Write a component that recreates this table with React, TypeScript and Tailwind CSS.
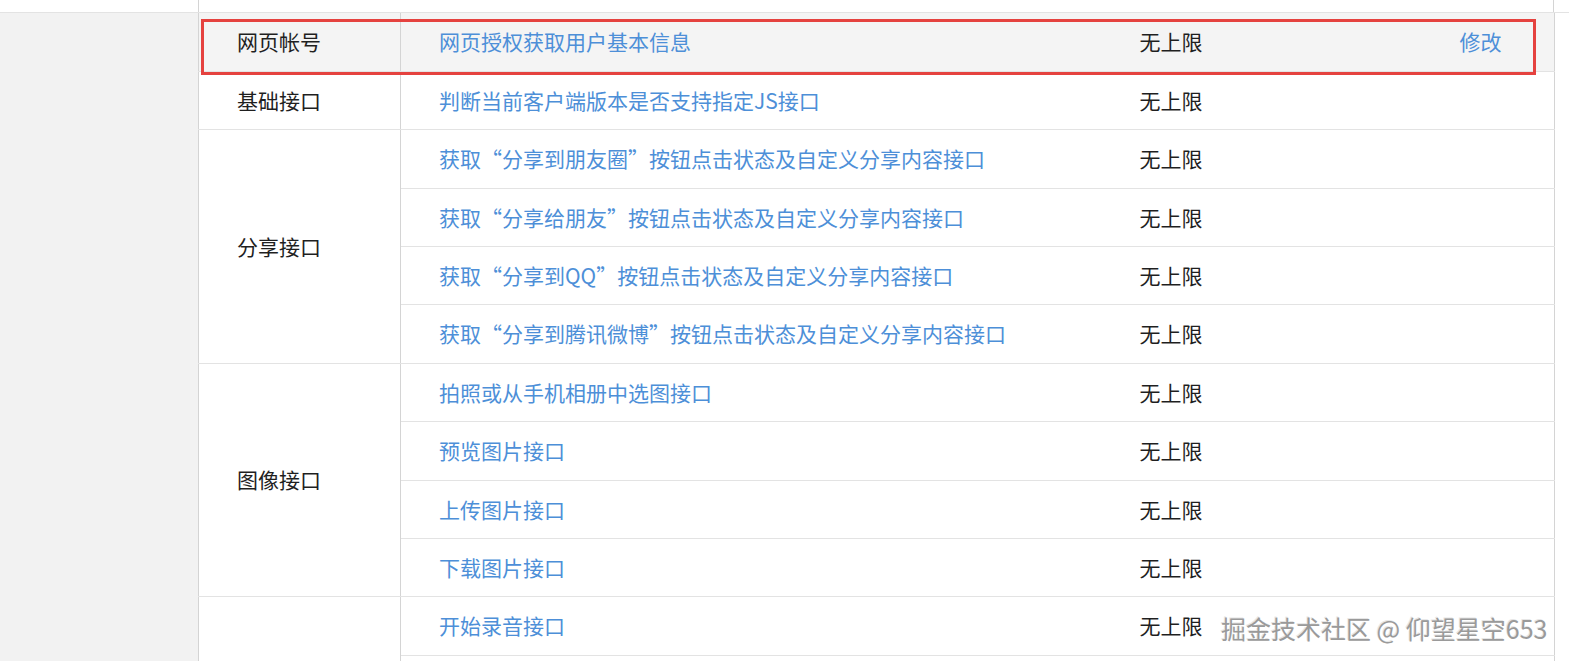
const font = { fontFamily: '"Noto Sans CJK SC", "Microsoft YaHei", sans-serif' };

type Row = { name: string; limit: string; action?: string };
type Group = { title: string; rows: Row[] };

const groups: Group[] = [
  { title: "网页帐号", rows: [{ name: "网页授权获取用户基本信息", limit: "无上限", action: "修改" }] },
  { title: "基础接口", rows: [{ name: "判断当前客户端版本是否支持指定JS接口", limit: "无上限" }] },
  {
    title: "分享接口",
    rows: [
      { name: "获取“分享到朋友圈”按钮点击状态及自定义分享内容接口", limit: "无上限" },
      { name: "获取“分享给朋友”按钮点击状态及自定义分享内容接口", limit: "无上限" },
      { name: "获取“分享到QQ”按钮点击状态及自定义分享内容接口", limit: "无上限" },
      { name: "获取“分享到腾讯微博”按钮点击状态及自定义分享内容接口", limit: "无上限" },
    ],
  },
  {
    title: "图像接口",
    rows: [
      { name: "拍照或从手机相册中选图接口", limit: "无上限" },
      { name: "预览图片接口", limit: "无上限" },
      { name: "上传图片接口", limit: "无上限" },
      { name: "下载图片接口", limit: "无上限" },
    ],
  },
  {
    title: "",
    rows: [
      { name: "开始录音接口", limit: "无上限" },
      // next row is below the fold
      { name: "", limit: "" },
    ],
  },
];

export default function App() {
  return (
    <div className="relative w-[1569px] h-[661px] overflow-hidden bg-white text-[21px]" style={font}>
      {/* top strip from previous row */}
      <div className="flex h-[13px] border-b border-[#e3e3e3]">
        <div className="w-[198px] bg-white" />
        <div className="w-[1356px] border-x border-[#d4d4d4]" />
      </div>

      <div className="flex">
        <div className="w-[198px] h-[660px] bg-[#f2f2f2] shrink-0" />
        <table className="w-[1356px] table-fixed border-collapse border-x border-[#d4d4d4]">
          <colgroup>
            <col className="w-[202px]" />
            <col className="w-[699px]" />
            <col className="w-[320px]" />
            <col className="w-[135px]" />
          </colgroup>
          <tbody>
            {groups.map((g, gi) =>
              g.rows.map((r, ri) => (
                <tr
                  key={`${gi}-${ri}`}
                  className={`h-[58.4px] border-b border-[#e3e3e3] ${gi === 0 ? "bg-[#f4f4f4]" : ""}`}
                >
                  {ri === 0 && (
                    <td
                      rowSpan={g.rows.length}
                      className="pl-[38px] text-[#1f1f1f] border-r border-[#d4d4d4] border-b border-b-[#e3e3e3] align-middle"
                    >
                      {g.title}
                    </td>
                  )}
                  <td className="pl-[38px] text-[#4d8fd8] whitespace-nowrap">{r.name}</td>
                  <td className="pl-10 text-[#1f1f1f]">{r.limit}</td>
                  <td className="pl-10 text-[#4d8fd8]">{r.action ?? ""}</td>
                </tr>
              ))
            )}
          </tbody>
        </table>
      </div>

      {/* highlight box */}
      <div className="absolute left-[201px] top-[19px] w-[1335px] h-[56px] border-[3px] border-[#e5423f] pointer-events-none" />

      {/* watermark */}
      <div
        className="absolute left-[1221px] top-[610px] text-[25px] text-[#9a9a9a] whitespace-nowrap"
        style={{ textShadow: "1px 1px 0 #ffffff, -1px -1px 0 #e6e6e6" }}
      >
        掘金技术社区 @ 仰望星空653
      </div>
    </div>
  );
}
